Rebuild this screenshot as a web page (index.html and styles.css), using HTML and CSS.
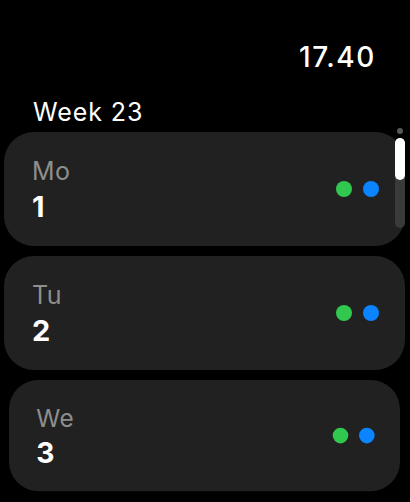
FILE: index.html
```html
<!DOCTYPE html>
<html lang="en">
<head>
  <meta charset="UTF-8" />
  <title>Week 23</title>
  <link rel="stylesheet" href="styles.css">
</head>
<body>

  <div class="screen">
    <header class="status">
      <span class="clock">17.40</span>
    </header>

    <h1 class="week">Week 23</h1>

    <div class="days">
      <div class="day">
        <div class="day-text">
          <div class="day-name">Mo</div>
          <div class="day-num">1</div>
        </div>
        <div class="dots">
          <span class="dot green"></span>
          <span class="dot blue"></span>
        </div>
      </div>

      <div class="day">
        <div class="day-text">
          <div class="day-name">Tu</div>
          <div class="day-num">2</div>
        </div>
        <div class="dots">
          <span class="dot green"></span>
          <span class="dot blue"></span>
        </div>
      </div>

      <div class="day far">
        <div class="day-text">
          <div class="day-name">We</div>
          <div class="day-num">3</div>
        </div>
        <div class="dots">
          <span class="dot green"></span>
          <span class="dot blue"></span>
        </div>
      </div>
    </div>

    <!-- scroll indicator -->
    <div class="scroller">
      <span class="scroller-dot"></span>
      <span class="scroller-track"><span class="scroller-thumb"></span></span>
    </div>
  </div>

</body>
</html>
```

FILE: styles.css
```css
html, body {
  margin: 0;
  background: #000;
}

body {
  font-family: Inter, "Noto Sans", sans-serif;
  color: #fff;
  width: 410px;
  height: 502px;
  overflow: hidden;
}

.screen {
  position: relative;
  height: 502px;
}

.status {
  display: flex;
  justify-content: flex-end;
  padding: 40px 34px 0 0;
}

.clock {
  font-size: 28px;
  line-height: 34px;
  font-weight: 500;
  letter-spacing: 1.6px;
}

.week {
  margin: 23px 0 0;
  padding-left: 33px;
  font-size: 25px;
  line-height: 30px;
  font-weight: 400;
  letter-spacing: 0.9px;
}

.days {
  display: flex;
  flex-direction: column;
  gap: 10px;
  margin-top: 5px;
  padding: 0 5px 0 4px;
}

.day {
  display: flex;
  align-items: center;
  justify-content: space-between;
  height: 114px;
  box-sizing: border-box;
  padding: 0 26px 0 28px;
  background: #212121;
  border-radius: 30px;
}

.day.far {
  transform: scale(0.975);
  transform-origin: top center;
}

.day-text {
  display: flex;
  flex-direction: column;
  gap: 4px;
  padding-top: 2px;
}

.day-name {
  font-size: 25px;
  line-height: 30px;
  color: #8e8e8e;
  letter-spacing: 0.5px;
}

.day-num {
  font-size: 29px;
  line-height: 34px;
  font-weight: 700;
}

.dots {
  display: flex;
  gap: 11px;
}

.dot {
  width: 16px;
  height: 16px;
  border-radius: 50%;
}

.dot.green {
  background: #30c84f;
}

.dot.blue {
  background: #0a84ff;
}

.scroller {
  position: absolute;
  top: 128px;
  left: 395px;
  width: 10px;
  display: flex;
  flex-direction: column;
  align-items: center;
  gap: 4px;
}

.scroller-dot {
  width: 6px;
  height: 6px;
  border-radius: 50%;
  background: #595959;
}

.scroller-track {
  display: block;
  width: 10px;
  height: 90px;
  border-radius: 5px;
  background: #3a3a3a;
}

.scroller-thumb {
  display: block;
  height: 42px;
  border-radius: 5px;
  background: #fff;
}
```
